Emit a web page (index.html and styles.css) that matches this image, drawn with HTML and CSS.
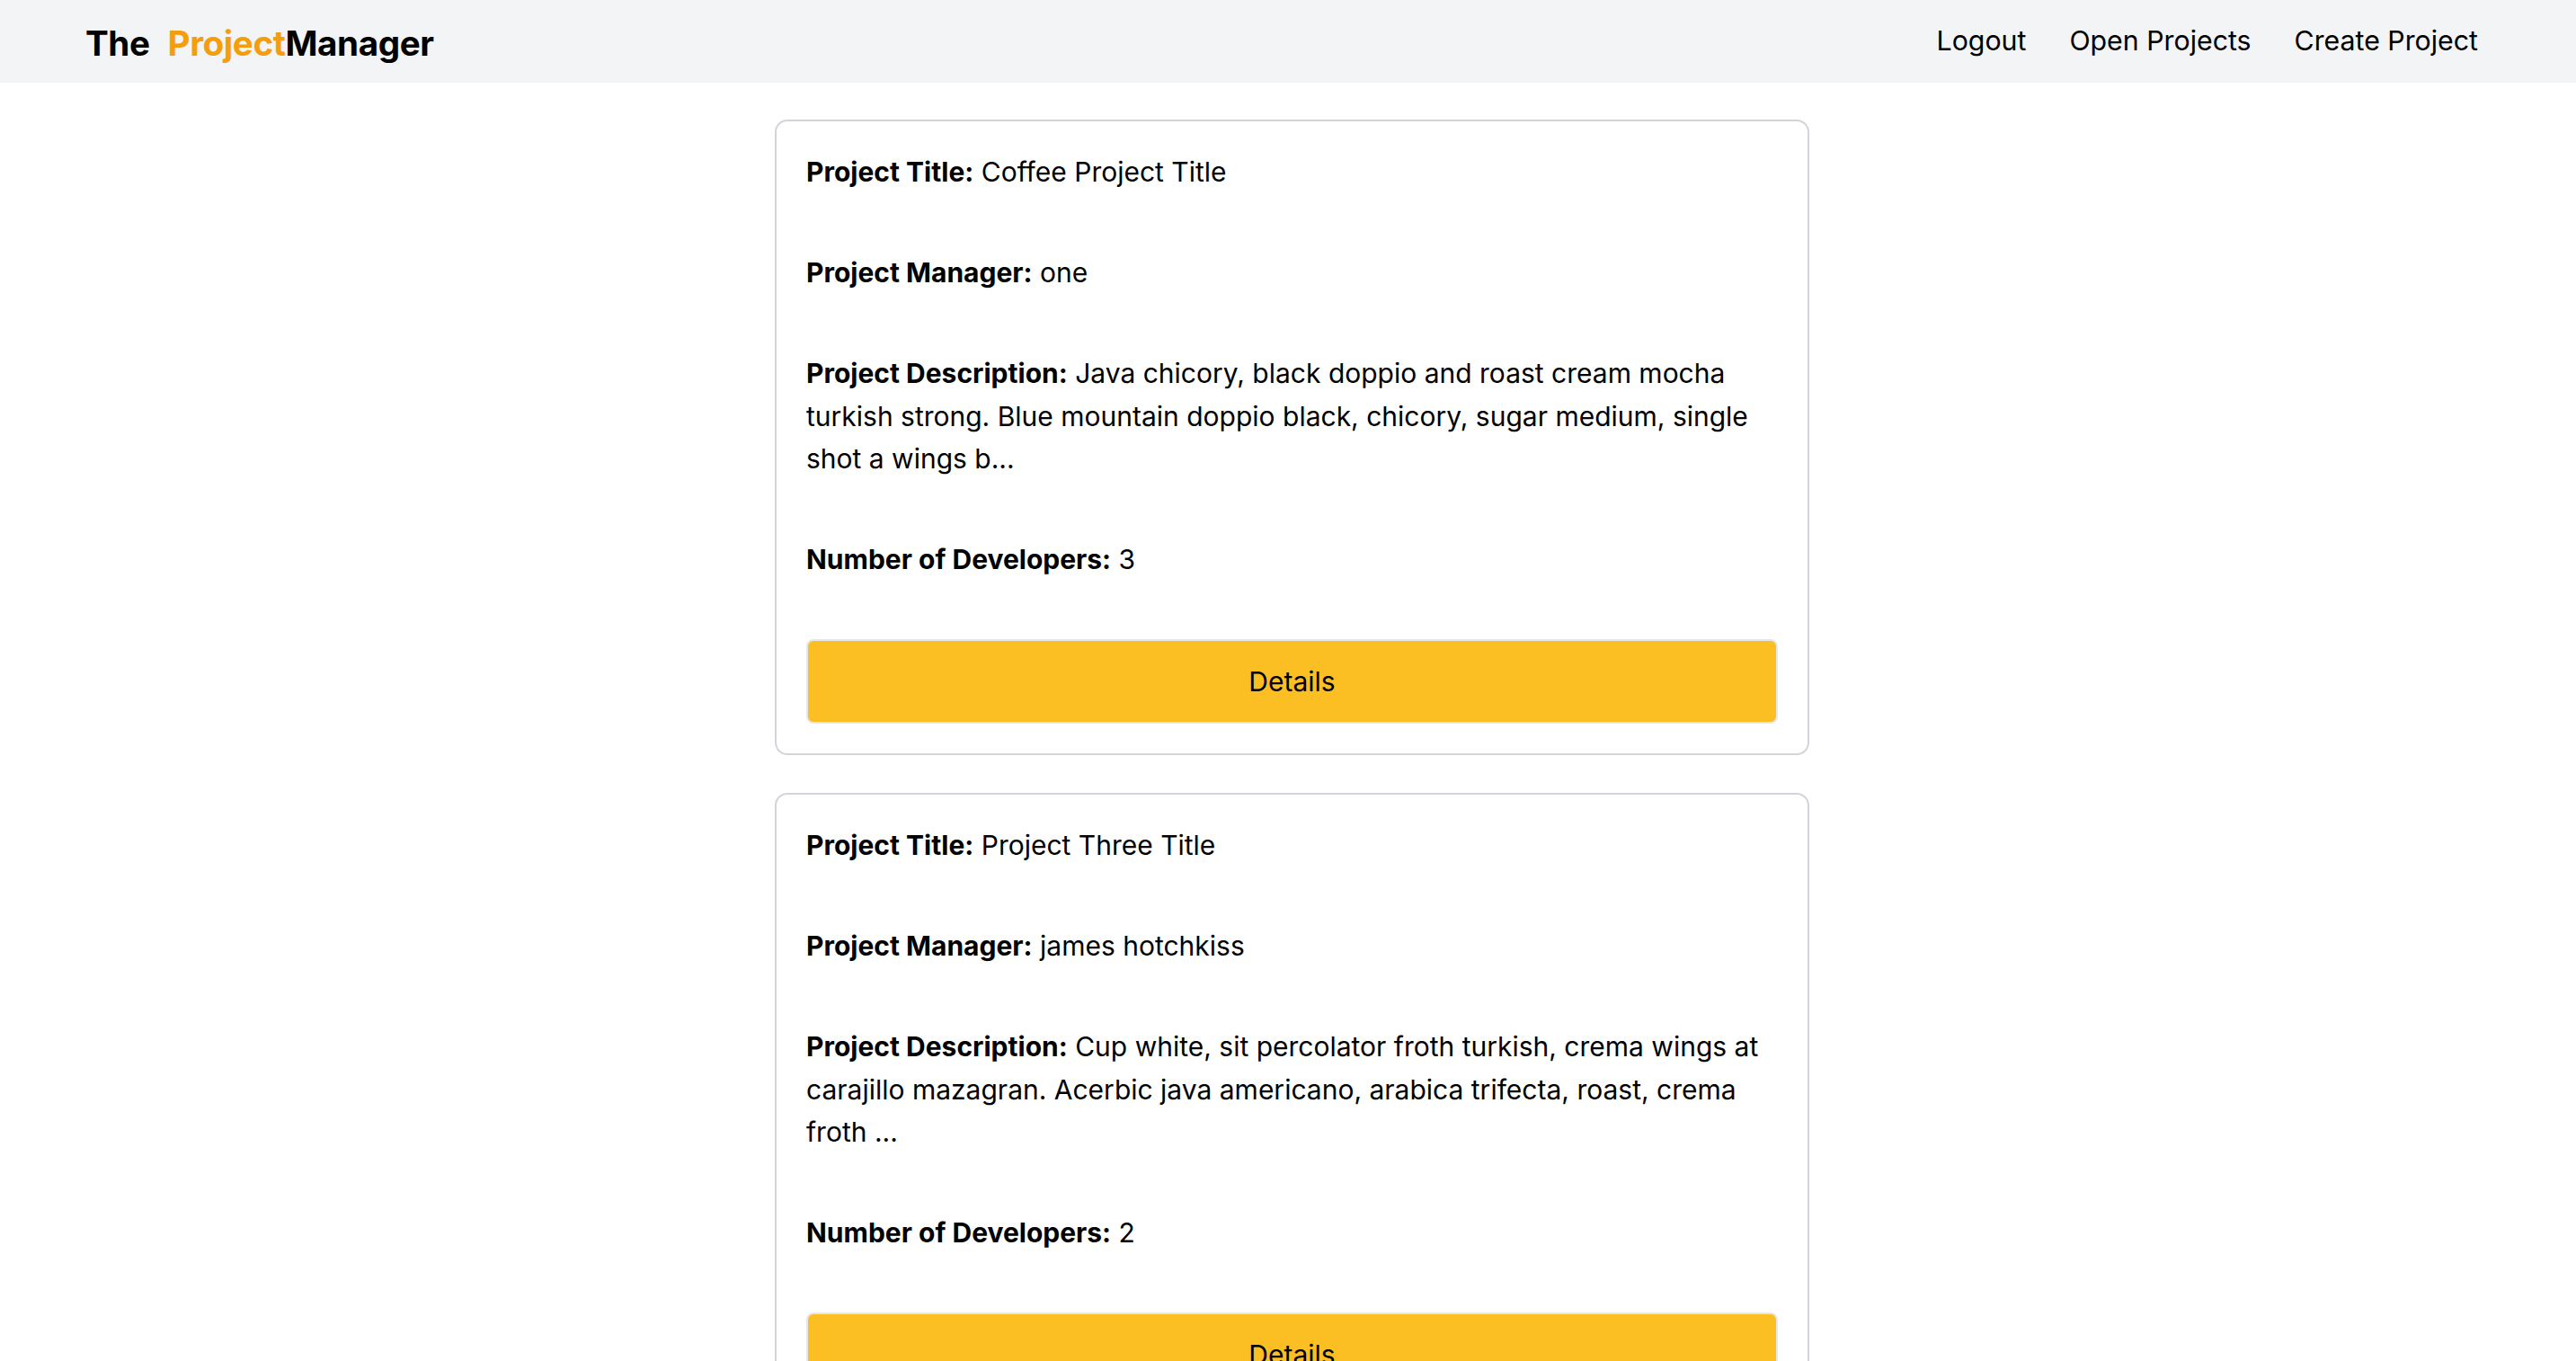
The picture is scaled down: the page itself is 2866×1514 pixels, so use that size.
FILE: index.html
```html
<!DOCTYPE html>
<html lang="en">
<head>
<meta charset="utf-8">
<title>The ProjectManager</title>
<link rel="stylesheet" href="styles.css">
</head>
<body>
<header class="topbar">
  <a class="logo" href="#"><span class="logo-the">The</span><span class="logo-project">Project</span>Manager</a>
  <nav class="nav">
    <a class="nav-link" href="#">Logout</a>
    <a class="nav-link" href="#">Open Projects</a>
    <a class="nav-link" href="#">Create Project</a>
  </nav>
</header>
<main class="list">
  <section class="card">
    <p class="field"><strong>Project Title:</strong> Coffee Project Title</p>
    <p class="field"><strong>Project Manager:</strong> one</p>
    <p class="field"><strong>Project Description:</strong> Java chicory, black doppio and roast cream mocha turkish strong. Blue mountain doppio black, chicory, sugar medium, single shot a wings b...</p>
    <p class="field"><strong>Number of Developers:</strong> 3</p>
    <button class="details-btn" type="button">Details</button>
  </section>
  <section class="card">
    <p class="field"><strong>Project Title:</strong> Project Three Title</p>
    <p class="field"><strong>Project Manager:</strong> james hotchkiss</p>
    <p class="field"><strong>Project Description:</strong> Cup white, sit percolator froth turkish, crema wings at carajillo mazagran. Acerbic java americano, arabica trifecta, roast, crema froth ...</p>
    <p class="field"><strong>Number of Developers:</strong> 2</p>
    <button class="details-btn" type="button">Details</button>
  </section>
</main>
</body>
</html>
```
FILE: styles.css
```css
* { box-sizing: border-box; }
html, body { margin: 0; padding: 0; background: #ffffff; }
body {
  font-family: Inter, "Noto Sans", sans-serif;
  color: #000;
}
.topbar {
  height: 92px;
  background: #f3f4f6;
  display: flex;
  align-items: center;
  justify-content: space-between;
  padding: 0 109px 0 95px;
}
.logo {
  font-family: Inter, "Noto Sans", sans-serif;
  font-weight: 700;
  font-size: 38.6px;
  color: #000;
  text-decoration: none;
  letter-spacing: -0.4px;
  padding-top: 4px;
}
.logo-the { margin-right: 20px; }
.logo-project { color: #f59e0b; }
.nav {
  display: flex;
  gap: 48px;
  padding-bottom: 3px;
}
.nav-link {
  font-size: 30.3px;
  color: #000;
  text-decoration: none;
  font-weight: 400;
}
.list {
  display: flex;
  flex-direction: column;
  align-items: center;
  gap: 42px;
  padding: 41px 0 0 9px;
}
.card {
  width: 1151px;
  border: 2px solid #d1d5db;
  border-radius: 14px;
  padding: 33px 33px 33px;
  display: flex;
  flex-direction: column;
  gap: 64.5px;
}
.field {
  margin: 0;
  font-size: 30px;
  line-height: 47.5px;
}
.field strong { font-weight: 700; }
.details-btn {
  height: 94px;
  width: 100%;
  background: #fbbf24;
  border: 2px solid #e5e7eb;
  border-radius: 8px;
  font-family: Inter, "Noto Sans", sans-serif;
  font-size: 30px;
  color: #000;
  cursor: pointer;
}
```
